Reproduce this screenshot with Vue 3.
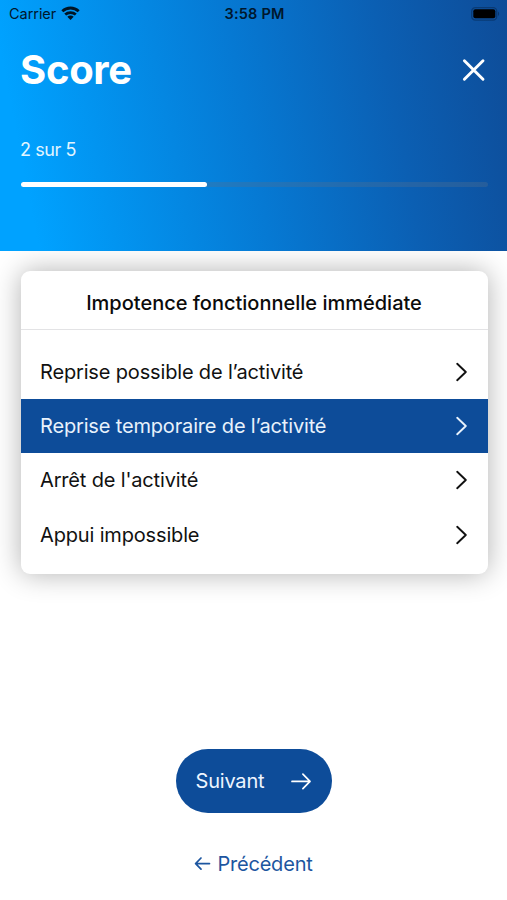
<script setup>
const options = [
  { label: 'Reprise possible de l’activité' },
  { label: 'Reprise temporaire de l’activité', selected: true },
  { label: "Arrêt de l'activité" },
  { label: 'Appui impossible' },
]
const progress = 40
</script>

<template>
  <main class="screen">
    <header class="hero">
      <div class="status">
        <div class="carrier">
          <span class="carrier-name">Carrier</span>
          <svg width="19" height="14" viewBox="0 0 19 14" fill="none" stroke="#001424" stroke-width="2.8">
            <path d="M1.3 5.2C6 .9 13 .9 17.7 5.2" />
            <path d="M4.2 8.5C7.2 5.9 11.8 5.9 14.8 8.5" />
            <path d="M6.3 10.8C8.2 9.2 10.8 9.2 12.7 10.8L9.5 13.9Z" fill="#001424" stroke="none" />
          </svg>
        </div>
        <span class="time">3:58 PM</span>
        <div class="battery-wrap">
          <svg width="29" height="14" viewBox="0 0 29 14">
            <rect x=".7" y=".7" width="25" height="12.4" rx="3.6" fill="none" stroke="#02152c" stroke-opacity=".35" stroke-width="1.3" />
            <rect x="2.3" y="2.3" width="22" height="9" rx="2" fill="#000" />
            <path d="M27 4.6C28.5 5.4 28.5 8.2 27 9Z" fill="#02152c" fill-opacity=".4" />
          </svg>
        </div>
      </div>
      <div class="title-row">
        <h1>Score</h1>
        <button class="close" aria-label="Fermer">
          <svg width="24" height="24" viewBox="0 0 24 24" fill="none" stroke="#fff" stroke-width="2.9" stroke-linecap="round">
            <path d="M2.4 2.7L21 21.3M21 2.7L2.4 21.3" />
          </svg>
        </button>
      </div>
      <p class="step"><span>2 sur 5</span></p>
      <div class="track"><div class="bar" :style="{ width: progress + '%' }"></div></div>
    </header>

    <section class="card">
      <h2><span>Impotence fonctionnelle immédiate</span></h2>
      <ul>
        <li v-for="o in options" :key="o.label" :class="{ selected: o.selected }">
          <span>{{ o.label }}</span>
          <svg width="12" height="20" viewBox="0 0 12 20" fill="none" stroke="currentColor" stroke-width="1.9" stroke-linecap="round" stroke-linejoin="round">
            <path d="M1.2 1.8L9.8 10L1.2 18.2" />
          </svg>
        </li>
      </ul>
    </section>

    <footer>
      <button class="next">
        <span>Suivant</span>
        <svg width="22" height="18" viewBox="0 0 22 18" fill="none" stroke="#fff" stroke-width="1.7" stroke-linecap="round" stroke-linejoin="round">
          <path d="M2 9.4H20M12.9 2.2L20 9.4L12.9 16.6" />
        </svg>
      </button>
      <button class="prev">
        <svg width="17" height="14" viewBox="0 0 17 14" fill="none" stroke="currentColor" stroke-width="1.7" stroke-linecap="round" stroke-linejoin="round">
          <path d="M15.5 6.6H1.6M7 1L1.6 6.6L7 12.2" />
        </svg>
        <span>Précédent</span>
      </button>
    </footer>
  </main>
</template>

<style>
body {
  margin: 0;
  background: #fff;
}
</style>

<style scoped>
.screen {
  box-sizing: border-box;
  width: 507px;
  height: 900px;
  display: flex;
  flex-direction: column;
  overflow: hidden;
  background: #fff;
  font-family: Inter, "Liberation Sans", sans-serif;
}
svg { display: block; flex: none; }
span { white-space: nowrap; }
button {
  border: 0;
  padding: 0;
  background: none;
  font: inherit;
}
.hero {
  box-sizing: border-box;
  height: 251px;
  flex: none;
  position: relative;
  z-index: 1;
  background: linear-gradient(79deg, #00a2ff 7%, #0679d3 49%, #0b5fb3 76%, #0e4c98 100%);
}
.status {
  height: 27px;
  padding: 0 7px 0 9px;
  display: grid;
  grid-template-columns: 1fr auto 1fr;
  align-items: center;
  color: #00172d;
  font-size: 14.5px;
}
.carrier { display: flex; align-items: center; gap: 5px; }
.carrier-name { letter-spacing: -0.05px; }
.carrier svg { margin-top: -2px; }
.time { font-weight: 600; letter-spacing: 0.2px; }
.battery-wrap { display: flex; justify-content: flex-end; }
.title-row {
  height: 86px;
  padding: 0 21px 0 20px;
  display: flex;
  align-items: center;
  justify-content: space-between;
}
h1 {
  margin: 0;
  color: #fff;
  font-size: 40px;
  line-height: 48px;
  font-weight: 700;
  letter-spacing: -0.3px;
}
.step {
  margin: 24px 0 0;
  padding: 0 20px;
  color: #e2f5ff;
  font-size: 18px;
  line-height: 26px;
  letter-spacing: -0.4px;
}
.track {
  height: 5px;
  margin: 19px 19.5px 0 20.5px;
  border-radius: 3px;
  background: rgba(82, 112, 143, 0.35);
}
.bar { height: 5px; border-radius: 3px; background: #fff; }
.card {
  box-sizing: border-box;
  flex: none;
  width: 467px;
  height: 303px;
  margin: 19.5px 0 0 20.5px;
  border-radius: 9px;
  background: #fff;
  box-shadow: 0 0 28px rgba(0, 0, 0, 0.31);
}
h2 {
  box-sizing: border-box;
  margin: 0;
  height: 59.5px;
  padding-top: 6px;
  display: flex;
  align-items: center;
  justify-content: center;
  border-bottom: 1px solid #e3e3e5;
  color: #0b0b0b;
  font-size: 20px;
  font-weight: 500;
}
ul { list-style: none; margin: 0; padding: 15px 0 0; }
li {
  height: 54.2px;
  padding: 0 20px 0 19.5px;
  display: flex;
  align-items: center;
  justify-content: space-between;
  color: #111;
  font-size: 20px;
  letter-spacing: -0.16px;
}
.selected { background: #0d4c99; color: #e8f2fc; }
footer {
  flex: 1;
  display: flex;
  flex-direction: column;
  align-items: center;
  padding-top: 175.5px;
}
.next {
  box-sizing: border-box;
  width: 156px;
  height: 64px;
  border-radius: 32px;
  padding: 0 20px 0 20px;
  display: flex;
  align-items: center;
  justify-content: space-between;
  background: #0d4c99;
  color: #edf5ff;
  font-size: 20px;
  letter-spacing: -0.2px;
}
.prev {
  margin-top: 37px;
  display: flex;
  align-items: center;
  gap: 6px;
  color: #1d56a0;
  font-size: 20px;
  line-height: 28px;
  letter-spacing: -0.2px;
}
</style>
